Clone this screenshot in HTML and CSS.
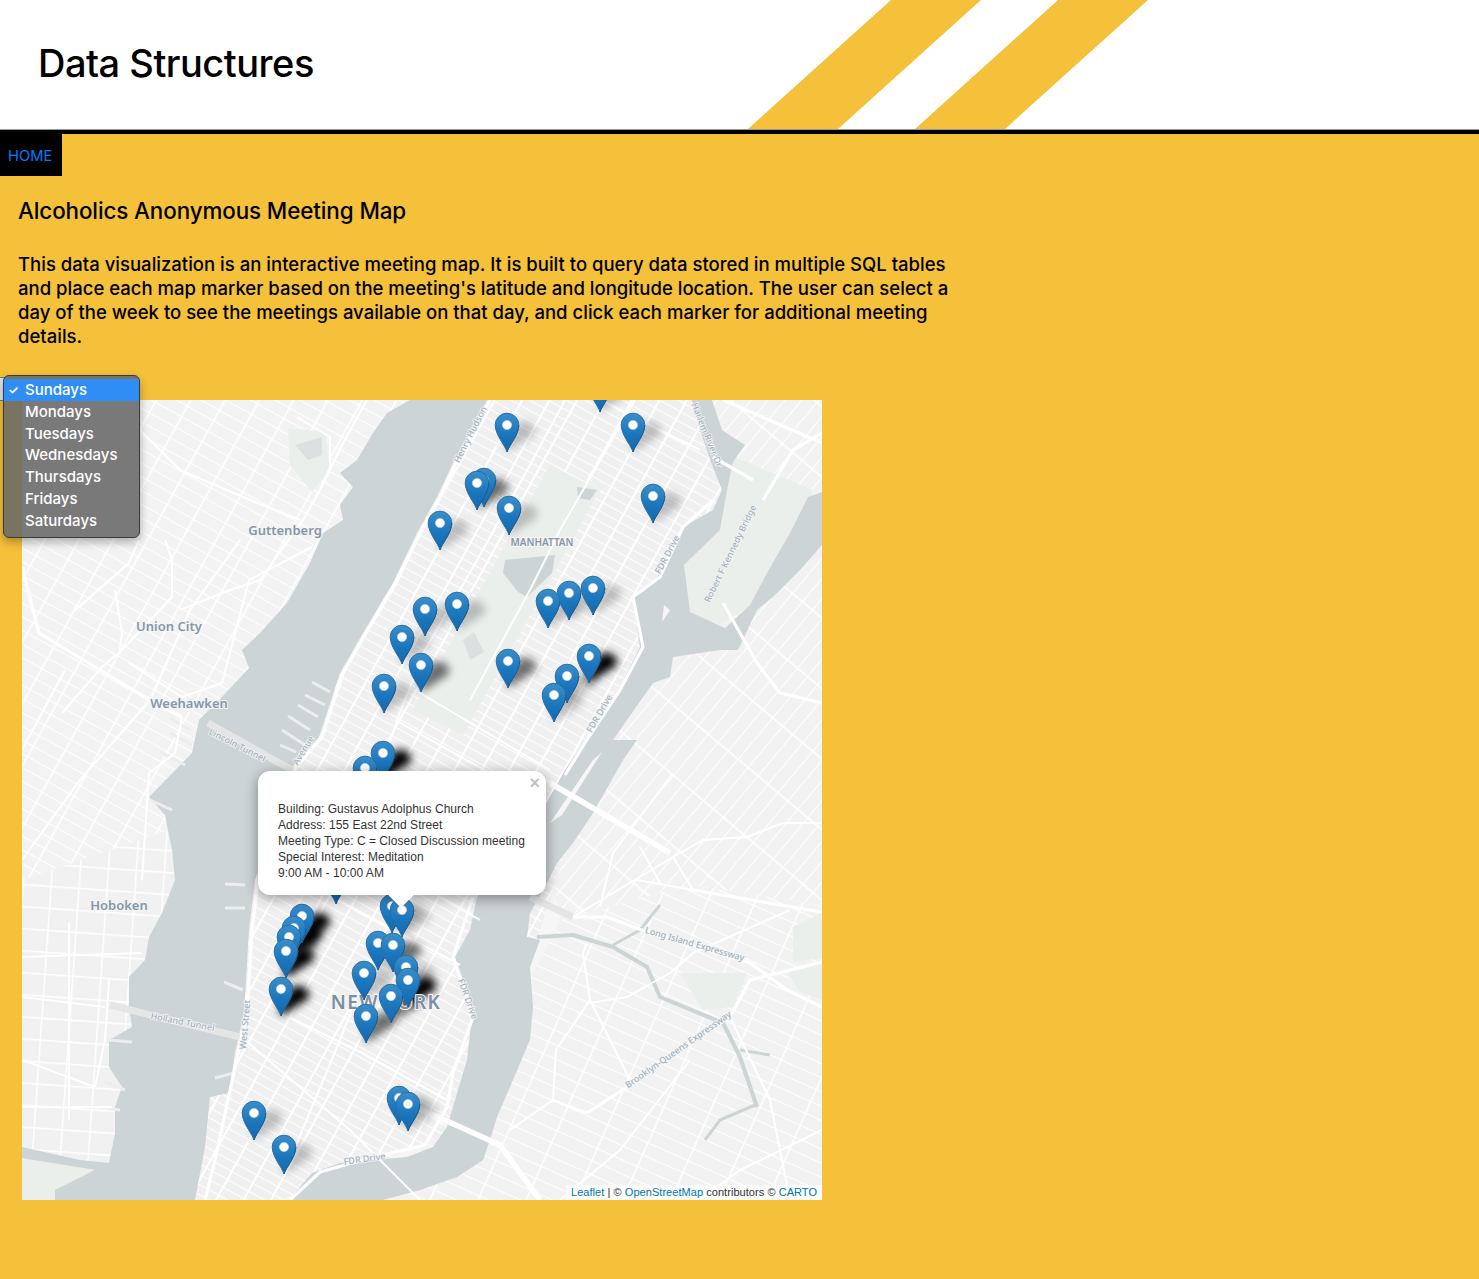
FILE: index.html
```html
<!DOCTYPE html>
<html lang="en">
<head>
    <meta charset="UTF-8">
    <meta name="viewport" content="width=device-width, initial-scale=1.0">
    <title>Data Structures</title>
    <link rel="stylesheet" href="styles.css">
</head>
<body>
    <header class="site-header">
        <h1 class="site-title">Data Structures</h1>
        <svg class="header-stripes" width="1479" height="129" viewBox="0 0 1479 129">
            <polygon class="stripe" points="891,0 981,0 838,129 748,129"/>
            <polygon class="stripe" points="1058,0 1148,0 1005,129 915,129"/>
        </svg>
    </header>

    <nav class="site-nav">
        <a class="nav-link" href="#">HOME</a>
    </nav>

    <section class="intro">
        <h2 class="intro-title">Alcoholics Anonymous Meeting Map</h2>
        <p class="intro-text">This data visualization is an interactive meeting map. It is built to query data stored in multiple SQL tables and place each map marker based on the meeting's latitude and longitude location. The user can select a day of the week to see the meetings available on that day, and click each marker for additional meeting details.</p>
    </section>

    <section class="map-section">
        <div class="map">
            <svg class="map-base" width="800" height="800" viewBox="22 400 800 800">
                <defs>
                    <!-- street grids -->
                    <pattern id="grid-man" width="24" height="9" patternUnits="userSpaceOnUse" patternTransform="rotate(29 400 800)">
                        <rect width="24" height="9" fill="#f0f0f0"/>
                        <rect width="2" height="9" fill="#fff"/>
                        <rect width="24" height="1" fill="#fff"/>
                    </pattern>
                    <pattern id="grid-nj" width="30" height="12" patternUnits="userSpaceOnUse" patternTransform="rotate(29)">
                        <rect width="30" height="12" fill="#f2f3f2"/>
                        <rect width="1.5" height="12" fill="#fff"/>
                        <rect width="30" height="1" fill="#fff"/>
                    </pattern>
                    <pattern id="grid-jc" width="28" height="22" patternUnits="userSpaceOnUse" patternTransform="rotate(4)">
                        <rect width="28" height="22" fill="#f1f1f1"/>
                        <rect width="1.5" height="22" fill="#fff"/>
                        <rect width="28" height="1.5" fill="#fff"/>
                    </pattern>
                    <pattern id="grid-queens" width="54" height="13" patternUnits="userSpaceOnUse" patternTransform="rotate(-50)">
                        <rect width="54" height="13" fill="#f2f2f2"/>
                        <rect width="1.6" height="13" fill="#fff"/>
                        <rect width="54" height="1" fill="#fff"/>
                    </pattern>
                    <pattern id="grid-bk" width="44" height="13" patternUnits="userSpaceOnUse" patternTransform="rotate(24)">
                        <rect width="44" height="13" fill="#f2f2f2"/>
                        <rect width="1.5" height="13" fill="#fff"/>
                        <rect width="44" height="1" fill="#fff"/>
                    </pattern>

                    <linearGradient id="pin-fill" x1="0" y1="0" x2="0" y2="1">
                        <stop offset="0" stop-color="#3a8ecb"/>
                        <stop offset="0.55" stop-color="#1b76bd"/>
                        <stop offset="1" stop-color="#1568ad"/>
                    </linearGradient>
                    <filter id="soft" x="-80%" y="-80%" width="260%" height="260%">
                        <feGaussianBlur stdDeviation="4"/>
                    </filter>

                    <path id="pin-shadow" d="M0 0L28 -18Q29 -32 12 -30L-2 -9Z"/>
                    <g id="pin">
                        <path class="pin-body" d="M0 0C-2 -7 -11.8 -17 -11.8 -27A11.8 11.8 0 1 1 11.8 -27C11.8 -17 2 -7 0 0Z"/>
                        <path class="pin-edge" d="M0 0C2 -7 11.8 -17 11.8 -27"/>
                        <circle class="pin-dot" cx="0" cy="-27" r="4.6"/>
                    </g>
                </defs>

                <!-- land -->
                <rect class="land" x="22" y="400" width="800" height="800"/>
                <polygon fill="url(#grid-nj)" points="22,400 430,400 170,830 22,880"/>
                <polygon fill="url(#grid-jc)" points="22,880 170,830 190,860 150,1200 22,1200"/>
                <polygon fill="url(#grid-queens)" points="690,400 822,400 822,905 690,885 560,920 540,800"/>
                <polygon fill="url(#grid-bk)" points="560,920 690,885 822,905 822,1200 380,1200 480,1080"/>
                <polygon fill="url(#grid-man)" points="470,400 700,400 730,480 600,740 480,1120 360,1170 280,1200 190,1200 240,860 340,660"/>

                <!-- parks -->
                <polygon class="park" points="550,465 600,490 463,735 413,710"/>
                <polygon class="park" points="730,455 812,490 815,520 790,550 760,600 720,625 686,610 684,565 720,530 726,490"/>
                <polygon class="park" points="680,973 747,973 733,1007 703,1010"/>
                <polygon class="park" points="787,973 822,960 822,1000 800,992"/>
                <polygon class="park" points="793,927 822,913 822,958 793,962"/>
                <polygon class="park" points="22,1150 110,1168 105,1200 22,1200"/>
                <polygon class="park" points="288,428 325,432 330,470 312,492 290,465"/>

                <!-- water -->
                <polygon class="water" points="410,400 387,413 373,433 357,460 340,473 353,487 340,505 343,520 323,533 310,563 287,603 260,633 242,650 249,668 222,697 199,720 192,753 149,797 165,815 172,850 175,880 162,913 149,937 145,960 129,977 129,1007 132,1027 109,1040 109,1067 122,1087 115,1107 115,1133 109,1163 55,1190 55,1200 195,1200 205,1147 210,1097 229,1093 235,1053 244,1013 249,930 255,880 262,860 292,767 319,737 340,673 363,633 393,583 417,533 437,497 453,463 473,427 487,400"/>
                <polygon class="water" points="692,400 700,430 712,465 722,490 713,510 683,527 657,577 633,597 640,647 620,687 590,733 565,770 548,800 520,850 477,897 470,930 455,957 473,1007 467,1060 447,1127 433,1147 407,1157 340,1163 312,1173 289,1200 383,1200 420,1190 457,1177 483,1160 490,1140 497,1117 510,1087 530,1040 533,1007 530,967 540,940 527,937 530,913 547,883 557,863 573,843 593,813 623,760 637,740 613,740 653,683 670,677 673,657 720,650 738,650 757,610 773,597 800,570 822,545 822,492 808,497 790,533 767,573 750,605 725,628 690,612 684,565 720,530 727,490 733,462 745,445 722,430 712,400"/>
                <polygon class="land" points="593,760 602,752 562,815 550,823"/>
                <polygon class="land" points="664,605 670,610 662,622"/>
                <polygon class="water" points="505,560 555,555 552,573 527,597 518,592 503,573"/>
                <polygon class="water" points="577,487 597,490 590,500 578,498"/>
                <polygon class="water-pale" points="463,640 474,632 484,652 470,660"/>
                <polygon class="water-pale" points="295,445 322,437 322,455 308,460"/>
                <polygon class="water" points="22,1147 80,1160 110,1163 108,1172 22,1158"/>
                <path class="creek" d="M537 937L573 935L613 947L647 967L660 997L723 1023L740 1057L757 1107"/>
                <path class="creek-thin" d="M613 945L640 930L660 905M740 1050L770 1055M755 1105L720 1120L705 1140"/>

                <!-- tunnels -->
                <path class="tunnel" d="M208 723L292 770"/>
                <path class="tunnel" d="M110 1005L240 1037"/>
                <path class="tunnel" d="M530 897L573 917"/>

                <!-- piers -->
                <path class="pier" d="M330 692L312 682M325 705L305 695M318 717L298 705M310 730L288 716M305 745L282 730M296 752L280 745"/>
                <path class="pier" d="M190 730L170 718M192 745L170 733M185 765L160 752M150 800L172 810"/>
                <path class="pier" d="M245 885L225 884M245 908L225 908M243 990L224 982M238 1072L215 1078M132 1042L108 1040M125 1090L105 1082M120 1110L105 1108"/>

                <!-- main roads -->
                <path class="road-xl" d="M550 783L670 853"/>
                <path class="road-xl" d="M407 1103L500 1145L540 1200"/>
                <path class="road-lg" d="M693 890L822 912"/>
                <path class="road-lg" d="M573 917L607 917L647 932L750 963L787 990L822 1007"/>
                <path class="road-lg" d="M587 1113L627 1087L667 1057L730 1017L750 980L822 962"/>
                <path class="road-lg" d="M490 400L476 427L456 463L440 497L420 533L396 583L366 633L343 673L322 737L296 767L266 860L258 880L252 930L247 1013L238 1053L228 1100L215 1160L205 1200"/>
                <path class="road-lg" d="M713 500L683 527L660 577L633 597L643 647L620 690L590 735L565 775"/>
                <path class="road-lg" d="M473 897L453 957L473 1017L453 1073L447 1107L425 1145L370 1158L320 1172L290 1200"/>
                <path class="road-lg" d="M22 567L39 633L72 653L145 697L182 717"/>
                <path class="road-lg" d="M713 457L753 480M723 603L757 663L780 693L822 703M763 500L793 450L822 433M723 400L822 443"/>
                <path class="road-md" d="M565 400L530 465L480 555L425 650L400 712L370 800L300 940M289 1017L362 1053L447 1100M245 1040L350 1130L420 1200M284 1174L340 1040L375 950L400 905"/>
                <path class="road-md" d="M415 690L550 770M395 720L520 790M330 835L480 920M300 880L460 965"/>
                <path class="road-md" d="M22 750L65 670M62 713L102 667L122 650L172 597L172 560L165 540M72 613L129 563L139 540M115 590L122 633L119 657M129 663L182 697L222 683L249 580L312 547M182 717L175 753L149 773L142 880"/>
                <path class="road-md" d="M297 417L330 437L330 467L320 490M367 400L343 443L320 490L303 520L260 580L230 590L180 610M240 540L190 610L150 700M110 400L180 470L250 500L300 520M22 860L80 780L150 700"/>
                <path class="road-md" d="M22 997L105 1007M109 980L105 1040L95 1087M22 1107L112 1107M69 923L69 1120M22 957L142 953M22 1060L95 1087"/>
                <path class="road-md" d="M822 823L783 823L747 837L703 840L673 857L693 890M640 847L660 883M637 880L693 890M573 917L673 857M587 943L583 953L590 1000L630 1080M590 1003L627 997L670 973L693 953L790 910M673 773L613 853L600 907"/>
                <path class="road-md" d="M700 1200L740 1170L822 1130M560 1200L620 1150L690 1060M730 1017L770 1100L790 1200M553 1100L556 1050L590 1000M510 1130L553 1100L587 1113"/>
                <path class="road-md" d="M600 400L640 420L700 450M635 400L560 530L530 590L470 700"/>

                <!-- shadows -->
                <g class="pin-shadows">
                    <use href="#pin-shadow" x="600" y="412"/>
                    <use href="#pin-shadow" x="507" y="452"/>
                    <use href="#pin-shadow" x="633" y="452"/>
                    <use class="dark" href="#pin-shadow" x="480" y="509"/>
                    <use href="#pin-shadow" x="653" y="523"/>
                    <use href="#pin-shadow" x="509" y="535"/>
                    <use href="#pin-shadow" x="440" y="550"/>
                    <use href="#pin-shadow" x="593" y="615"/>
                    <use href="#pin-shadow" x="569" y="620"/>
                    <use href="#pin-shadow" x="548" y="628"/>
                    <use href="#pin-shadow" x="457" y="631"/>
                    <use href="#pin-shadow" x="425" y="636"/>
                    <use href="#pin-shadow" x="402" y="664"/>
                    <use class="darkest" href="#pin-shadow" x="589" y="683"/>
                    <use class="dark" href="#pin-shadow" x="508" y="688"/>
                    <use class="dark" href="#pin-shadow" x="421" y="692"/>
                    <use href="#pin-shadow" x="567" y="703"/>
                    <use href="#pin-shadow" x="384" y="713"/>
                    <use href="#pin-shadow" x="554" y="722"/>
                    <use class="darkest" href="#pin-shadow" x="383" y="780"/>
                    <use href="#pin-shadow" x="365" y="795"/>
                    <use href="#pin-shadow" x="392" y="933"/>
                    <use href="#pin-shadow" x="402" y="937"/>
                    <use class="darkest" href="#pin-shadow" x="302" y="943"/>
                    <use class="darkest" href="#pin-shadow" x="294" y="955"/>
                    <use class="dark" href="#pin-shadow" x="289" y="964"/>
                    <use href="#pin-shadow" x="378" y="970"/>
                    <use class="dark" href="#pin-shadow" x="393" y="972"/>
                    <use class="darkest" href="#pin-shadow" x="286" y="978"/>
                    <use href="#pin-shadow" x="406" y="994"/>
                    <use href="#pin-shadow" x="364" y="1000"/>
                    <use class="darkest" href="#pin-shadow" x="408" y="1007"/>
                    <use class="darkest" href="#pin-shadow" x="281" y="1016"/>
                    <use class="dark" href="#pin-shadow" x="391" y="1023"/>
                    <use class="dark" href="#pin-shadow" x="366" y="1043"/>
                    <use href="#pin-shadow" x="399" y="1125"/>
                    <use href="#pin-shadow" x="408" y="1131"/>
                    <use href="#pin-shadow" x="254" y="1140"/>
                    <use href="#pin-shadow" x="284" y="1174"/>
                </g>

                <!-- labels -->
                <text class="place" x="285" y="535">Guttenberg</text>
                <text class="place" x="169" y="631">Union City</text>
                <text class="place" x="189" y="708">Weehawken</text>
                <text class="place" x="119" y="910">Hoboken</text>
                <text class="place small" x="542" y="546">MANHATTAN</text>
                <text class="place big" x="386" y="1009">NEW YORK</text>
                <text class="street" transform="translate(473 436) rotate(-63)">Henry Hudson</text>
                <text class="street" transform="translate(704 436) rotate(68)">Harlem River Dr</text>
                <text class="street" transform="translate(733 555) rotate(-64)">Robert F Kennedy Bridge</text>
                <text class="street" transform="translate(670 556) rotate(-62)">FDR Drive</text>
                <text class="street" transform="translate(602 715) rotate(-60)">FDR Drive</text>
                <text class="street" transform="translate(306 752) rotate(-58)">Avenue</text>
                <text class="street" transform="translate(236 748) rotate(27)">Lincoln Tunnel</text>
                <text class="street" transform="translate(182 1025) rotate(11)">Holland Tunnel</text>
                <text class="street" transform="translate(248 1025) rotate(-85)">West Street</text>
                <text class="street" transform="translate(465 1000) rotate(70)">FDR Drive</text>
                <text class="street" transform="translate(694 947) rotate(16)">Long Island Expressway</text>
                <text class="street" transform="translate(680 1052) rotate(-35)">Brooklyn-Queens Expressway</text>
                <text class="street" transform="translate(365 1162) rotate(-8)">FDR Drive</text>

                <!-- markers -->
                <use href="#pin" x="600" y="412"/>
                <use href="#pin" x="507" y="452"/>
                <use href="#pin" x="633" y="452"/>
                <use href="#pin" x="484" y="507"/>
                <use href="#pin" x="477" y="510"/>
                <use href="#pin" x="653" y="523"/>
                <use href="#pin" x="509" y="535"/>
                <use href="#pin" x="440" y="550"/>
                <use href="#pin" x="593" y="615"/>
                <use href="#pin" x="569" y="620"/>
                <use href="#pin" x="548" y="628"/>
                <use href="#pin" x="457" y="631"/>
                <use href="#pin" x="425" y="636"/>
                <use href="#pin" x="402" y="664"/>
                <use href="#pin" x="589" y="683"/>
                <use href="#pin" x="508" y="688"/>
                <use href="#pin" x="421" y="692"/>
                <use href="#pin" x="567" y="703"/>
                <use href="#pin" x="384" y="713"/>
                <use href="#pin" x="554" y="722"/>
                <use href="#pin" x="383" y="780"/>
                <use href="#pin" x="365" y="795"/>
                <use href="#pin" x="336" y="904"/>
                <use href="#pin" x="392" y="933"/>
                <use href="#pin" x="402" y="937"/>
                <use href="#pin" x="302" y="943"/>
                <use href="#pin" x="294" y="955"/>
                <use href="#pin" x="289" y="964"/>
                <use href="#pin" x="378" y="970"/>
                <use href="#pin" x="393" y="972"/>
                <use href="#pin" x="286" y="978"/>
                <use href="#pin" x="406" y="994"/>
                <use href="#pin" x="364" y="1000"/>
                <use href="#pin" x="408" y="1007"/>
                <use href="#pin" x="281" y="1016"/>
                <use href="#pin" x="391" y="1023"/>
                <use href="#pin" x="366" y="1043"/>
                <use href="#pin" x="399" y="1125"/>
                <use href="#pin" x="408" y="1131"/>
                <use href="#pin" x="254" y="1140"/>
                <use href="#pin" x="284" y="1174"/>
            </svg>

            <div class="popup">
                <span class="popup-close">×</span>
                <p class="popup-text">Building: Gustavus Adolphus Church<br>Address: 155 East 22nd Street<br>Meeting Type: C = Closed Discussion meeting<br>Special Interest: Meditation<br>9:00 AM - 10:00 AM</p>
                <span class="popup-tip"></span>
            </div>

            <div class="attribution">
                <a href="#">Leaflet</a> | © <a href="#">OpenStreetMap</a> contributors © <a href="#">CARTO</a>
            </div>
        </div>

        <!-- open select, the rest of the control peeks out at the left -->
        <span class="select-edge"></span>
        <ul class="day-menu">
            <li class="day selected"><span class="day-check">✓</span>Sundays</li>
            <li class="day">Mondays</li>
            <li class="day">Tuesdays</li>
            <li class="day">Wednesdays</li>
            <li class="day">Thursdays</li>
            <li class="day">Fridays</li>
            <li class="day">Saturdays</li>
        </ul>
    </section>
</body>
</html>
```

FILE: styles.css
```css
body {
    margin: 0;
    background: #f5c13b;
    color: #000;
    font-family: Inter, "Liberation Sans", sans-serif;
}

/* header */
.site-header {
    position: relative;
    display: flex;
    align-items: center;
    box-sizing: border-box;
    height: 130px;
    padding: 0 0 4px 38px;
    background: #fff;
    border-bottom: 1px solid #999;
    overflow: hidden;
}

.site-title {
    margin: 0;
    font-size: 38px;
    font-weight: 500;
    letter-spacing: -0.5px;
}

.header-stripes {
    position: absolute;
    top: 0;
    left: 0;
}

.stripe {
    fill: #f5c13b;
}

.site-nav {
    display: flex;
    border-top: 4px solid #000;
}

.nav-link {
    height: 42px;
    padding: 1px 10px 0 8px;
    box-sizing: border-box;
    background: #000;
    color: #007bff;
    font-size: 14.7px;
    line-height: 42px;
    text-decoration: none;
}

/* intro text */
.intro {
    width: 940px;
    padding: 20px 0 0 18px;
}

.intro-title {
    margin: 0 0 27px;
    font-size: 22.4px;
    font-weight: 500;
    letter-spacing: -0.1px;
    line-height: 29px;
}

.intro-text {
    margin: 0;
    font-size: 18.55px;
    font-weight: 500;
    line-height: 24px;
}

/* map */
.map-section {
    position: relative;
    padding: 52px 0 79px 22px;
}

.map {
    position: relative;
    width: 800px;
    height: 800px;
    overflow: hidden;
}

.map-base {
    display: block;
}

.land {
    fill: #f5f6f5;
}

.park {
    fill: #eaefeb;
}

.water {
    fill: #cdd4d6;
}

.water-pale {
    fill: #dbe0e0;
}

.creek,
.creek-thin {
    fill: none;
    stroke: #cdd4d6;
    stroke-linejoin: round;
}

.creek {
    stroke-width: 4;
}

.creek-thin {
    stroke-width: 3;
}

.tunnel {
    fill: none;
    stroke: #e4e6e6;
    stroke-width: 7;
}

.pier {
    fill: none;
    stroke: #eceeee;
    stroke-width: 3;
}

.road-xl,
.road-lg,
.road-md {
    fill: none;
    stroke: #fff;
    stroke-linejoin: round;
}

.road-xl {
    stroke-width: 5.5;
}

.road-lg {
    stroke-width: 3.2;
}

.road-md {
    stroke-width: 2;
}

.place {
    fill: #8496a8;
    font-family: "Noto Sans", sans-serif;
    font-size: 13px;
    font-weight: 600;
    text-anchor: middle;
    stroke: #f5f6f5;
    stroke-width: 2px;
    paint-order: stroke;
}

.place.small {
    font-size: 10px;
}

.place.big {
    fill: #7c8ea1;
    font-size: 19px;
    font-weight: 600;
    letter-spacing: 1.4px;
}

.street {
    fill: #a3b1bd;
    font-family: "Noto Sans", sans-serif;
    font-size: 9px;
    font-weight: 500;
    text-anchor: middle;
    stroke: #f5f6f5;
    stroke-width: 1.5px;
    paint-order: stroke;
}

.pin-shadows use {
    fill: #000;
    opacity: 0.22;
    filter: url(#soft);
}

.pin-shadows use.dark {
    opacity: 0.55;
}

.pin-shadows use.darkest {
    opacity: 1;
}

.pin-body {
    fill: url(#pin-fill);
    stroke: #2a6fa3;
    stroke-width: 1;
}

.pin-edge {
    fill: none;
    stroke: #1a5c92;
    stroke-width: 1;
}

.pin-dot {
    fill: #fff;
    stroke: #c9dcea;
    stroke-width: 0.6;
}

/* popup over the map */
.popup {
    position: absolute;
    top: 371px;
    left: 236px;
    box-sizing: border-box;
    width: 288px;
    height: 124px;
    padding: 30px 20px 0;
    background: #fff;
    border-radius: 12px;
    box-shadow: 0 3px 14px rgba(0, 0, 0, 0.4);
}

.popup-text {
    margin: 0;
    color: #333;
    font-family: "Liberation Sans", sans-serif;
    font-size: 12px;
    letter-spacing: 0.03px;
    line-height: 16px;
}

.popup-close {
    position: absolute;
    top: 4px;
    right: 6px;
    color: #c3c3c3;
    font-family: "Liberation Sans", sans-serif;
    font-size: 18px;
    font-weight: 700;
    line-height: 16px;
}

.popup-tip {
    position: absolute;
    bottom: -9px;
    left: 134px;
    width: 18px;
    height: 18px;
    background: #fff;
    transform: rotate(45deg);
}

.attribution {
    position: absolute;
    right: 0;
    bottom: 0;
    padding: 0 5px;
    background: rgba(255, 255, 255, 0.7);
    color: #333;
    font-family: "Liberation Sans", sans-serif;
    font-size: 11px;
    letter-spacing: 0.05px;
    line-height: 15px;
}

.attribution a {
    color: #0078a8;
    text-decoration: none;
}

/* open dropdown */
.select-edge {
    position: absolute;
    top: 29px;
    left: 0;
    width: 4px;
    height: 22px;
    background: #dfe6ee;
    border: 1px solid #5b7fa8;
    border-left: 0;
}

.day-menu {
    position: absolute;
    top: 27px;
    left: 3px;
    box-sizing: border-box;
    width: 137px;
    height: 163px;
    margin: 0;
    padding: 3px 0 0;
    list-style: none;
    background: rgba(104, 104, 104, 0.88);
    border: 1px solid #3a3a3a;
    border-radius: 6px;
    box-shadow: 0 4px 10px rgba(0, 0, 0, 0.3);
}

.day {
    position: relative;
    padding-left: 21px;
    color: #fff;
    font-size: 15px;
    font-weight: 500;
    line-height: 21.8px;
}

.day.selected {
    background: #2f8ef5;
}

.day-check {
    position: absolute;
    left: 4px;
    font-size: 12px;
    font-weight: 700;
}
```
